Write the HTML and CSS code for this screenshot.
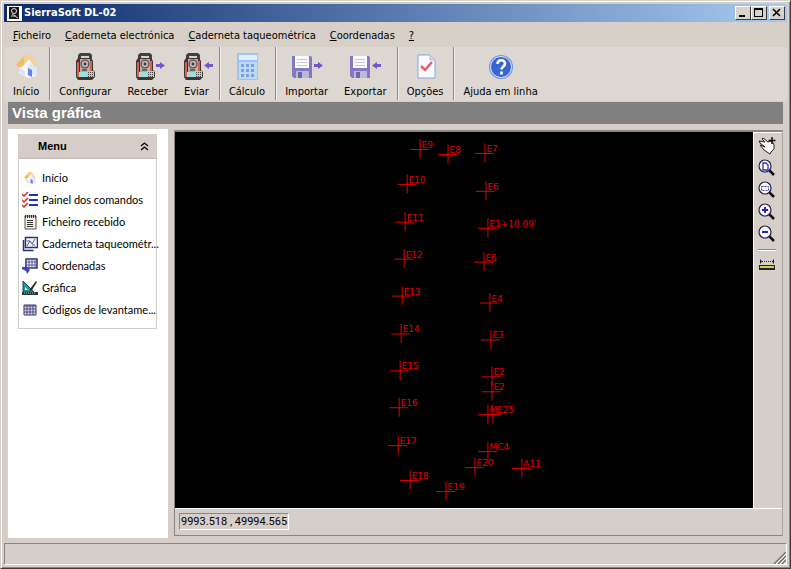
FILE: index.html
```html
<!DOCTYPE html>
<html lang="pt">
<head>
<meta charset="utf-8">
<title>SierraSoft DL-02</title>
<link rel="stylesheet" href="styles.css">
</head>
<body>
<svg class="defs" aria-hidden="true">
  <defs>
    <symbol id="station" viewBox="0 0 22 28">
      <path d="M4 2l2-2h10l2 2v6H4z" fill="#45403f"/><path d="M7 3h8v4H7z" fill="#d8d2cc"/>
      <path d="M2 8l2-3h13l2 3v9l2 2v5l-3 3H4l-2-3z" fill="#3e3536"/>
      <path d="M3 9h2v15H3zM16 8h2v10h-2z" fill="#dc6048"/>
      <path d="M6 6h10v13H6z" fill="#b5aba7"/>
      <circle cx="11" cy="11" r="4.500" fill="#5c5253"/><circle cx="11" cy="11" r="3.200" fill="#c2b8b4"/><circle cx="11" cy="11" r="1.400" fill="#40383c"/>
      <path d="M5 19h8v5H5z" fill="#9be2df"/><path d="M13 18h7v6h-7z" fill="#c9c4bf"/>
      <path d="M14 19h1v1h-1zm2 0h1v1h-1zm2 0h1v1h-1zm-4 2h1v1h-1zm2 0h1v1h-1zm2 0h1v1h-1zm-4 2h1v1h-1zm2 0h1v1h-1zm2 0h1v1h-1z" fill="#4a4547"/>
      <path d="M8 16h5v2H8z" fill="#6c6263"/>
    </symbol>
    <symbol id="home" viewBox="0 0 24 26">
      <path d="M4 12l8-7 9 8v10l-8 2-9-5z" fill="#f8faff"/>
      <path d="M12 24V14l5-5 5 5v7z" fill="#dce8fc"/>
      <path d="M1 12L9 3l6-1-7 11-3 2z" fill="#f4bd65"/><path d="M9 3l6-1 8 11-3 1-6-8-5 6z" fill="#f6d290"/>
      <path d="M13 15l4 2v7l-4-2z" fill="#6e83d8"/><path d="M4 15l6 3v5l-6-4z" fill="#d5e1f8"/>
    </symbol>
    <symbol id="floppy" viewBox="0 0 22 24">
      <path d="M1 1h19l1 2v20H3l-2-2z" fill="#8179c4"/><path d="M4 1h14v12H4z" fill="#fafaff"/>
      <path d="M6 4h10v1H6zm0 3h10v1H6zm0 3h10v1H6z" fill="#c8c8dc"/><path d="M5 16h13v7H5z" fill="#bdb8d8"/><path d="M7 17h4v6H7z" fill="#6e66a8"/>
    </symbol>
    <symbol id="arrow" viewBox="0 0 9 7"><path d="M0 2h4V0l5 3.500L4 7V5H0z" fill="#7356cf"/></symbol>
    <symbol id="lens" viewBox="0 0 18 18">
      <path d="M11 11l5 5" stroke="#111" stroke-width="2.500"/><circle cx="7" cy="7" r="6" fill="#f7f7ff" stroke="#252540" stroke-width="1.200"/>
    </symbol>
  </defs>
</svg>
<div class="window">
  <header class="titlebar">
    <svg class="app-icon" viewBox="0 0 15 15"><path d="M0 0h15v15H0z" fill="#fff"/><path d="M2 1h10v12H2z" fill="#161616"/><circle cx="7" cy="5" r="2.500" fill="none" stroke="#ddd"/><path d="M4 10h5M5 8l6 4" stroke="#ccc"/></svg>
    <h1>SierraSoft DL-02</h1>
    <div class="controls">
      <button type="button" aria-label="Minimizar"><svg viewBox="0 0 12 10"><path d="M2 7h6v2H2z"/></svg></button>
      <button type="button" aria-label="Maximizar"><svg viewBox="0 0 12 10"><path d="M1 0h9v9H1zM2 2v6h7V2z" fill-rule="evenodd"/></svg></button>
      <button type="button" aria-label="Fechar" class="close"><svg viewBox="0 0 12 10"><path d="M2 1l7 7M9 1L2 8" stroke="#000" stroke-width="1.600"/></svg></button>
    </div>
  </header>
  <nav class="menubar">
    <button type="button"><u>F</u>icheiro</button>
    <button type="button"><u>C</u>aderneta electrónica</button>
    <button type="button"><u>C</u>aderneta taqueométrica</button>
    <button type="button"><u>C</u>oordenadas</button>
    <button type="button"><u>?</u></button>
  </nav>
  <div class="toolbar">
    <div class="group">
      <button type="button"><svg viewBox="0 0 40 30"><use href="#home" x="9" y="1" width="24" height="26"/></svg>Início</button>
    </div>
    <div class="group">
      <button type="button"><svg viewBox="0 0 40 30"><use href="#station" x="9" y="1" width="22" height="28"/></svg>Configurar</button>
      <button type="button"><svg viewBox="0 0 40 30"><use href="#station" x="6" y="1" width="22" height="28"/><use href="#arrow" x="28" y="10" width="9" height="7"/></svg>Receber</button>
      <button type="button"><svg viewBox="0 0 40 30"><use href="#station" x="6" y="1" width="22" height="28"/><use href="#arrow" x="-37" y="10" width="9" height="7" transform="scale(-1 1)"/></svg>Eviar</button>
    </div>
    <div class="group">
      <button type="button"><svg viewBox="0 0 40 30"><path d="M10 1h21v27H10z" fill="#9fc3f1"/><path d="M12 3h18v5H12z" fill="#deefff"/><path d="M12 10h18v17H12z" fill="#bdd8f8"/><path d="M14 12h3v3h-3zm5 0h3v3h-3zm5 0h3v3h-3zm-10 5h3v3h-3zm5 0h3v3h-3zm5 0h3v3h-3zm-10 5h3v3h-3zm5 0h3v3h-3zm5 0h3v3h-3z" fill="#7aa2e0"/></svg>Cálculo</button>
    </div>
    <div class="group">
      <button type="button"><svg viewBox="0 0 40 30"><use href="#floppy" x="4" y="3" width="22" height="24"/><use href="#arrow" x="27" y="10" width="9" height="7"/></svg>Importar</button>
      <button type="button"><svg viewBox="0 0 40 30"><use href="#floppy" x="4" y="3" width="22" height="24"/><use href="#arrow" x="-36" y="10" width="9" height="7" transform="scale(-1 1)"/></svg>Exportar</button>
    </div>
    <div class="group">
      <button type="button"><svg viewBox="0 0 40 30"><path d="M13 3h12l5 5v18H13z" fill="#fbfbff" stroke="#83a7df"/><path d="M25 3v5h5" fill="#cfdcf5" stroke="#a9bce0"/><path d="M16 14l4 4 7-8" fill="none" stroke="#e66060" stroke-width="2.500"/></svg>Opções</button>
    </div>
    <div class="group">
      <button type="button"><svg viewBox="0 0 40 30"><circle cx="20" cy="15" r="12" fill="#7392df"/><circle cx="20" cy="15" r="10.500" fill="#3766d3" stroke="#dfe8fb"/><path d="M16.500 12c0-5 7.500-5 7.500-.5 0 3-3.500 3-3.500 6M20.500 19.500v3" fill="none" stroke="#fff" stroke-width="2.600"/></svg>Ajuda em linha</button>
    </div>
  </div>
  <h2 class="heading">Vista gráfica</h2>
  <main class="content">
    <aside class="sidebar">
      <section class="panel">
        <button type="button" class="panel-head"><span>Menu</span><svg viewBox="0 0 9 9"><path d="M1 4l3.500-3L8 4M1 8l3.500-3L8 8" fill="none" stroke="#000" stroke-width="1.300"/></svg></button>
        <ul>
          <li><a href="#"><svg viewBox="0 0 16 16"><use href="#home" x="1" y="1" width="14" height="14"/></svg><span>Início</span></a></li>
          <li><a href="#"><svg viewBox="0 0 16 16"><path d="M0 2l2 2 4-4M0 8l2 2 4-4M0 13l2 2 4-4" fill="none" stroke="#d82c2c" stroke-width="1.500"/><path d="M7 2h9v2H7zm0 5h9v2H7zm0 5h9v2H7z" fill="#2431c4"/></svg><span>Painel dos comandos</span></a></li>
          <li><a href="#"><svg viewBox="0 0 16 16"><path d="M3 2h11v13H3z" fill="#f2f0e8" stroke="#55534f"/><path d="M3 1h1v3H3zm2 0h1v3H5zm2 0h1v3H7zm2 0h1v3H9zm2 0h1v3h-1zm2 0h1v3h-1z" fill="#333"/><path d="M5 6h6v1H5zm0 2h6v1H5zm0 2h6v1H5zm0 2h6v1H5z" fill="#333"/></svg><span>Ficheiro recebido</span></a></li>
          <li><a href="#"><svg viewBox="0 0 16 16"><path d="M1.500 4v10.500h10M3.500 1.500h12v10h-12z" fill="#f2f2ff" stroke="#30306d" stroke-width="1.500"/><path d="M5 10l3-5 2 3 3-5M5 5h3M10 9h3" fill="none" stroke="#555599"/></svg><span>Caderneta taqueométr...</span></a></li>
          <li><a href="#"><svg viewBox="0 0 16 16"><path d="M4 1h11v9H4z" fill="#f4f4ff" stroke="#30306d" stroke-width="1.500"/><path d="M7 1v9M10 1v9M13 1v9M4 4h11M4 7h11" stroke="#58589c"/><path d="M0 9h3V7l5 5-3 4-1-3-4-2z" fill="#3d42c4"/></svg><span>Coordenadas</span></a></li>
          <li><a href="#"><svg viewBox="0 0 16 16"><path d="M1 1v11h11z" fill="#1d9b9a" stroke="#174d54"/><path d="M3 7v3h3z" fill="#fff"/><path d="M0 12h16v3H0z" fill="#223a42"/><path d="M8 9l6-8 1 1-5 8-2 1z" fill="#2c2925"/><path d="M2 13h12" stroke="#c7c7a0" stroke-dasharray="1 1"/></svg><span>Gráfica</span></a></li>
          <li><a href="#"><svg viewBox="0 0 16 16"><path d="M2 3h12v10H2z" fill="#dcdcec" stroke="#343464"/><path d="M2 4h12M5 3v10M8 3v10M11 3v10M2 7h12M2 10h12" stroke="#48487c"/></svg><span>Códigos de levantame...</span></a></li>
        </ul>
      </section>
    </aside>
    <section class="viewer">
      <svg class="plot" viewBox="175 132 577 377" role="img" aria-label="Vista gráfica">
        <defs><path id="pt" d="M-9.500 .5h19M.5-9.500v19"/></defs>
        <g class="crosses">
          <use href="#pt" x="419" y="149"/><use href="#pt" x="447" y="154"/><use href="#pt" x="484" y="153"/><use href="#pt" x="406" y="184"/><use href="#pt" x="485" y="191"/><use href="#pt" x="404" y="222"/><use href="#pt" x="487" y="228"/><use href="#pt" x="403" y="259"/><use href="#pt" x="483" y="262"/><use href="#pt" x="401" y="296"/><use href="#pt" x="489" y="303"/><use href="#pt" x="400" y="334"/><use href="#pt" x="490" y="340"/><use href="#pt" x="399" y="371"/><use href="#pt" x="491" y="377"/><use href="#pt" x="491" y="392"/><use href="#pt" x="398" y="408"/><use href="#pt" x="487" y="415"/><use href="#pt" x="492" y="415"/><use href="#pt" x="397" y="446"/><use href="#pt" x="487" y="452"/><use href="#pt" x="474" y="468"/><use href="#pt" x="521" y="469"/><use href="#pt" x="409" y="481"/><use href="#pt" x="445" y="492"/>
        </g>
        <g class="labels">
          <text x="421" y="148">E9</text><text x="449" y="153">E8</text><text x="486" y="152">E7</text><text x="408" y="183">E10</text><text x="487" y="190">E6</text><text x="406" y="221">E11</text><text x="489" y="227">E1+10.09'</text><text x="405" y="258">E12</text><text x="485" y="261">E6</text><text x="403" y="295">E13</text><text x="491" y="302">E4</text><text x="402" y="333">E14</text><text x="492" y="339">E3</text><text x="401" y="370">E15</text><text x="493" y="376">E2</text><text x="493" y="391">E2</text><text x="400" y="407">E16</text><text x="489" y="414">ME25</text><text x="399" y="445">E17</text><text x="489" y="451">MC4</text><text x="476" y="467">E20</text><text x="523" y="468">A11</text><text x="411" y="480">E18</text><text x="447" y="491">E19</text>
        </g>
      </svg>
      <div class="tools">
        <button type="button" aria-label="Mover"><svg viewBox="0 0 18 18"><path d="M1 4l6 1-3-3 1-1 5 4 4-1 2 4v4l-3 3-1 2-6-4-4-5 5 2-5-4z" fill="#fff" stroke="#222"/><path d="M14 0v7M10.500 3.500h7" stroke="#111" stroke-width="1.500"/></svg></button>
        <button type="button" aria-label="Ver tudo"><svg viewBox="0 0 18 18"><use href="#lens" width="18" height="18"/><path d="M5 4h3l2 2v5H5z" fill="#fff" stroke="#3030bc" stroke-width="1.300"/></svg></button>
        <button type="button" aria-label="Zoom janela"><svg viewBox="0 0 18 18"><use href="#lens" width="18" height="18"/><path d="M3.500 5.500h7v4h-7z" fill="none" stroke="#4444a4" stroke-dasharray="2 1"/></svg></button>
        <button type="button" aria-label="Aumentar"><svg viewBox="0 0 18 18"><use href="#lens" width="18" height="18"/><path d="M4 7h6M7 4v6" stroke="#2424bc" stroke-width="2"/></svg></button>
        <button type="button" aria-label="Diminuir"><svg viewBox="0 0 18 18"><use href="#lens" width="18" height="18"/><path d="M4 7h6" stroke="#2424bc" stroke-width="2"/></svg></button>
        <hr>
        <button type="button" aria-label="Medir"><svg viewBox="0 0 18 18"><path d="M2 2v5l2-2.500zM16 2v5l-2-2.500z" fill="#111"/><path d="M4 4.500h10" stroke="#222" stroke-dasharray="1 1"/><path d="M1 8h16v5H1z" fill="#222"/><path d="M2 9h14v2H2z" fill="#cfd044"/></svg></button>
      </div>
      <div class="coords"><output>9993.518 , 49994.565</output></div>
    </section>
  </main>
  <footer class="status"><svg viewBox="0 0 13 13"><path d="M1 13L13 1M5 13l8-8M9 13l4-4" stroke="#77736f" stroke-width="1.500"/><path d="M3 13L13 3M7 13l6-6M11 13l2-2" stroke="#fff"/></svg></footer>
</div>
</body>
</html>
```
FILE: styles.css
```css
* { box-sizing: border-box; }
body {
  margin: 0;
  background: #d6cfc9;
  font: 11px/14px "DejaVu Sans Condensed", "DejaVu Sans", sans-serif;
  color: #000;
}
button { border: 0; padding: 0; background: none; font: inherit; color: inherit; }
svg { display: block; flex: none; }
.defs { position: absolute; width: 0; height: 0; }
.window {
  display: flex;
  flex-direction: column;
  min-height: 100vh;
  padding: 3px;
  border: 1px solid #d6d2ca;
  border-right-color: #403c3a;
  border-bottom-color: #403c3a;
  box-shadow: inset 1px 1px #fff, inset -1px -1px #8b8783;
}
.titlebar {
  display: flex;
  align-items: center;
  height: 18px;
  padding: 0 2px 0 3px;
  background: linear-gradient(90deg, #0c2a6c, #a6caf0);
}
.app-icon { width: 15px; height: 15px; }
h1 { margin: 0 0 0 2px; color: #fff; font: bold 11px/14px "DejaVu Sans Condensed", "DejaVu Sans", sans-serif; }
.controls { display: flex; margin-left: auto; }
.controls button {
  display: grid;
  place-items: center;
  width: 16px;
  height: 14px;
  background: #d8d3cc;
  border: 1px solid;
  border-color: #fff #403c3a #403c3a #fff;
}
.controls .close { margin-left: 2px; }
.controls svg { width: 12px; height: 10px; }
.menubar { display: flex; align-items: center; gap: 14px; height: 25px; padding: 2px 9px 0; background: #d6d0c8; }
.toolbar { display: flex; height: 54px; padding-bottom: 1px; background: #ddd7d1; }
.group { display: flex; padding: 0 2px 0 1px; border-right: 1px solid #8a8682; box-shadow: 1px 0 #f4f1ed; }
.group:last-child { border: 0; box-shadow: none; }
.toolbar button { display: flex; flex-direction: column; align-items: center; gap: 3px; padding: 5px 8px 0; }
.toolbar svg { width: 40px; height: 30px; margin: 0 -8px; }
.heading {
  margin: 1px 4px 5px;
  height: 22px;
  padding-left: 4px;
  background: #808080;
  color: #fff;
  font: bold 15px/22px "Liberation Sans", sans-serif;
}
.content { display: grid; grid-template-columns: 160px minmax(0, 1fr); gap: 6px; flex: 1; margin: 0 4px; }
.sidebar { padding: 5px 11px 5px 10px; background: #fff; font: 11px/14px Lato, "Liberation Sans", sans-serif; }
.panel-head {
  display: flex;
  align-items: center;
  justify-content: space-between;
  width: 100%;
  height: 25px;
  padding: 0 8px 0 20px;
  background: #d6cdc8;
  border-bottom: 1px solid #c2bbb6;
  font: bold 11px/14px "Liberation Sans", sans-serif;
}
.panel-head svg { width: 9px; height: 9px; }
.panel ul { margin: 0; padding: 8px 0 7px 3px; border: 1px solid #d0ccc8; border-top: 0; list-style: none; }
.panel a { display: flex; align-items: center; gap: 4px; height: 22px; color: #000; text-decoration: none; }
.panel a svg { width: 16px; height: 16px; }
.panel span { white-space: nowrap; }
.viewer {
  display: grid;
  grid-template-columns: minmax(0, 1fr) 29px;
  grid-template-rows: 1fr 27px;
  margin: 1px 0 2px;
  border: 1px solid #8a8682;
  border-top-width: 2px;
  border-right-color: #aaa49f;
}
.plot { width: 100%; height: 0; min-height: 100%; background: #000; }
.crosses { fill: none; stroke: #e60000; }
.labels { fill: #e60000; font: 9px "DejaVu Sans", sans-serif; }
.tools { display: flex; flex-direction: column; align-items: center; gap: 4px; padding: 4px 2px 0 0; border-left: 1px solid #fff; border-top: 1px solid #fff; }
.tools svg { width: 18px; height: 18px; }
.tools hr { width: 18px; margin: 2px 0; border: 0; border-top: 1px solid #8a8682; border-bottom: 1px solid #fff; }
.coords { grid-column: 1 / -1; padding: 4px; border-top: 1px solid #fff; }
output {
  display: inline-block;
  padding: 0 1px;
  border: 1px solid;
  border-color: #8a8682 #fff #fff #8a8682;
  font: 11px/15px Roboto, "Liberation Sans", sans-serif;
}
.status {
  display: flex;
  align-items: flex-end;
  justify-content: flex-end;
  height: 22px;
  margin-top: 5px;
  border: 1px solid;
  border-color: #8a8682 #fff #fff #8a8682;
}
.status svg { width: 13px; height: 13px; }
```
